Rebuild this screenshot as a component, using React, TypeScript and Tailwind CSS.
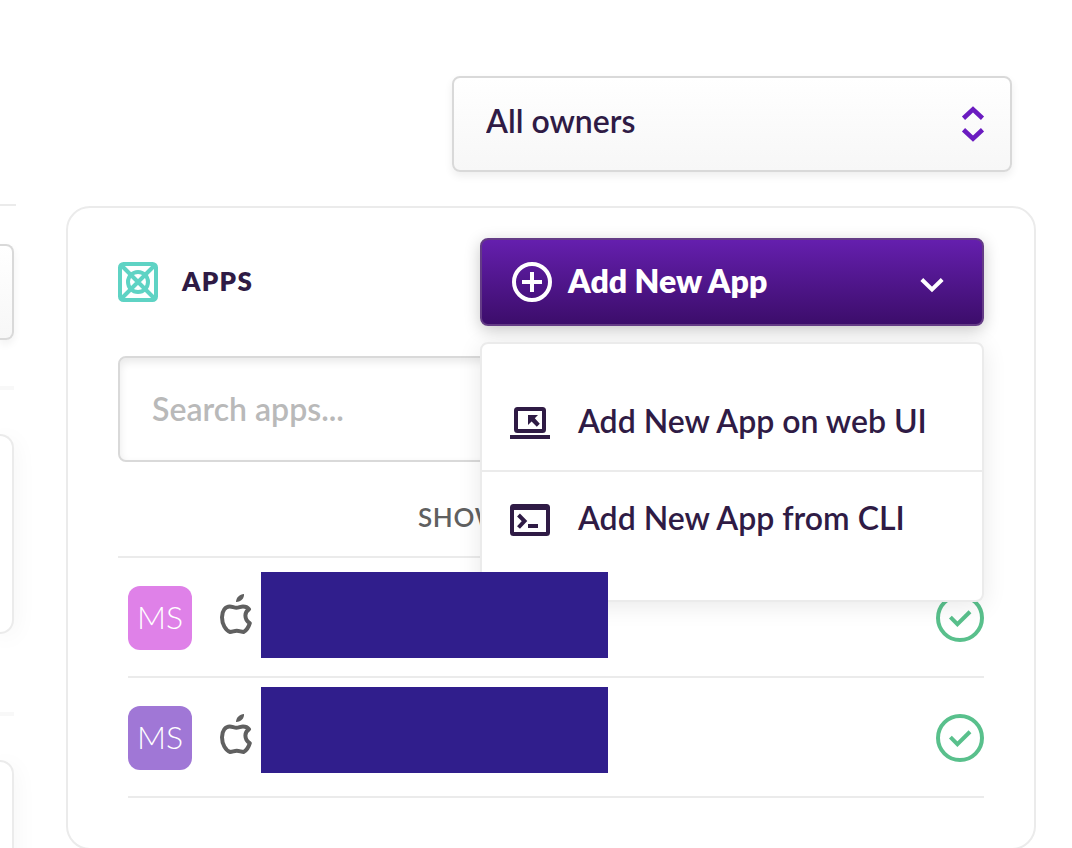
import type { ReactNode } from 'react'

type AppRow = {
  id: string
  initials: string
  tone: string
}

const apps: AppRow[] = [
  { id: 'app-1', initials: 'MS', tone: 'bg-[#df81e8]' },
  { id: 'app-2', initials: 'MS', tone: 'bg-[#a077d6]' },
]

function SortIcon() {
  return (
    <svg
      viewBox="0 0 24 40"
      className="pointer-events-none absolute top-7 right-[27px] h-10 w-6"
      fill="none"
      stroke="#6b1cc0"
      strokeWidth="4.6"
      aria-hidden="true"
    >
      <path d="M2.5 14.2 12 5.3l9.5 8.9M2.5 25.8l9.5 8.9 9.5-8.9" />
    </svg>
  )
}

function AppsIcon() {
  return (
    <svg viewBox="0 0 40 40" className="size-10" fill="none" stroke="#5fd3c4" aria-hidden="true">
      <rect x="2" y="2" width="36" height="36" rx="3.5" strokeWidth="4" />
      <circle cx="20" cy="20" r="10" strokeWidth="4" />
      <path d="M3 3l34 34M37 3 3 37" strokeWidth="4" />
    </svg>
  )
}

function PlusCircleIcon() {
  return (
    <svg viewBox="0 0 40 40" className="size-10" fill="none" stroke="#fff" strokeWidth="4" aria-hidden="true">
      <circle cx="20" cy="20" r="18" />
      <path d="M20 10v20M10 20h20" />
    </svg>
  )
}

function ChevronIcon() {
  return (
    <svg viewBox="0 0 24 24" className="ml-auto size-6" fill="none" stroke="#fff" strokeWidth="4" aria-hidden="true">
      <path d="M1.8 9.5 12 19.5 22.2 9.5" />
    </svg>
  )
}

function LaptopIcon() {
  return (
    <svg viewBox="0 0 40 32" className="h-8 w-10" fill="none" stroke="#2f1b45" strokeWidth="4" aria-hidden="true">
      <rect x="6" y="2" width="28" height="22" rx="1.5" />
      <path d="M0 30h40" />
      <path d="M18 8h10l-3.2 3.2 5 5.6-3 2.9-5.2-5.3L18 18z" fill="#2f1b45" stroke="none" />
    </svg>
  )
}

function TerminalIcon() {
  return (
    <svg viewBox="0 0 40 32" className="h-8 w-10" fill="none" stroke="#2f1b45" strokeWidth="4" aria-hidden="true">
      <rect x="2" y="2" width="36" height="28" rx="1.5" />
      <path d="M2 4h36M8.5 11l6 6-6 6.5M18 22h10" />
    </svg>
  )
}

function AppleIcon() {
  return (
    <svg viewBox="0 0 32 40" className="mb-2 h-10 w-8" fill="none" aria-hidden="true">
      <path d="M24 0c.4 4.4-3.2 8.2-8 8 0-4.4 3.6-7.800 8-8z" fill="#606060" />
      <path
        d="M16.4 13.7c2.2 0 4.2-1.2 6.6-1.2 2.4 0 4.6.9 6 2.7-2.4 1.5-3.6 3.5-3.6 6.3 0 3.6 1.4 5.8 4.4 7.7-1.2 3.9-3.6 7.5-6.2 8.8-2.2 0-4.2-1.2-6.8-1.2-2.6 0-4.4 1.2-6.6 1.2C5.6 36.5 2 30 2 23.3 2 16.7 5.4 12.5 9.8 12.5c2.4 0 4.4 1.2 6.6 1.2z"
        stroke="#606060"
        strokeWidth="4"
        strokeLinejoin="round"
      />
    </svg>
  )
}

function CheckIcon() {
  return (
    <svg viewBox="0 0 48 48" className="ml-auto size-12" fill="none" stroke="#59c08c" strokeWidth="4" aria-hidden="true">
      <circle cx="24" cy="24" r="22" />
      <path d="M14.4 23.2l7 7L34 17.8" />
    </svg>
  )
}

function MenuItem({ icon, children }: { icon: ReactNode; children: ReactNode }) {
  return (
    <li className="h-24 border-[#ebebeb] not-last:border-b-2">
      <button
        type="button"
        role="menuitem"
        className="flex size-full items-center gap-7 px-7 text-left text-[32px] leading-10 font-semibold whitespace-nowrap"
      >
        {icon}
        <span className="pb-1">{children}</span>
      </button>
    </li>
  )
}

function SideColumn() {
  return (
    <aside className="flex w-4 shrink-0 flex-col pt-[204px]">
      <hr className="shrink-0 border-t-2 border-[#ebebeb]" />
      <div className="mt-[38px] mr-0.5 h-24 shrink-0 rounded-r-lg border-2 border-l-0 border-[#d9d9d9] bg-linear-to-b from-white to-[#f7f7f7] shadow-[0_4px_8px_rgba(0,0,0,0.06)]" />
      <hr className="mt-[46px] mr-0.5 shrink-0 border-t-4 border-[#f8f8f8]" />
      <div className="mt-11 mr-0.5 h-[200px] shrink-0 rounded-r-2xl border-2 border-l-0 border-[#ebebeb] bg-white shadow-[0_4px_24px_rgba(0,0,0,0.06)]" />
      <hr className="mt-[78px] mr-0.5 shrink-0 border-t-4 border-[#f8f8f8]" />
      <div className="mt-11 mr-0.5 h-[200px] shrink-0 rounded-r-2xl border-2 border-l-0 border-[#ebebeb] bg-white shadow-[0_4px_24px_rgba(0,0,0,0.06)]" />
    </aside>
  )
}

export default function App() {
  return (
    <div className="flex h-screen overflow-hidden bg-white font-['Lato',sans-serif] text-[#2f1b45]">
      <SideColumn />

      <main className="min-w-0 flex-1 pt-[76px] pr-9 pl-[50px]">
        <div className="mr-6 flex justify-end">
          <div className="relative w-[560px]">
            <select
              aria-label="Owner"
              className="h-24 w-full appearance-none rounded-lg border-2 border-[#d9d9d9] bg-linear-to-b from-white to-[#f7f7f7] px-8 pb-1.5 text-[32px] font-semibold shadow-[0_4px_8px_rgba(0,0,0,0.07)]"
            >
              <option>All owners</option>
            </select>
            <SortIcon />
          </div>
        </div>

        <section className="mt-[34px] rounded-3xl border-2 border-[#ebebeb] px-[50px] pt-[30px] pb-[50px]">
          <header className="flex items-center justify-between">
            <div className="flex items-center gap-6">
              <AppsIcon />
              <h2 className="pb-0.5 text-[26px] leading-8 font-extrabold tracking-wider">APPS</h2>
            </div>

            <div className="relative w-[504px]">
              <button
                type="button"
                aria-expanded="true"
                aria-haspopup="menu"
                className="flex h-[88px] w-full items-center gap-4 rounded-lg border-2 border-[#643c86] bg-linear-to-b from-[#651fae] to-[#3c0d6b] pr-[38px] pl-[30px] text-[32px] font-extrabold text-white shadow-[0_4px_16px_rgba(0,0,0,0.22)]"
              >
                <PlusCircleIcon />
                <span className="pb-0.5">Add New App</span>
                <ChevronIcon />
              </button>

              <ul
                role="menu"
                className="absolute top-full right-0 z-10 mt-4 w-full rounded-lg border-2 border-[#ebebeb] bg-white py-8 shadow-[0_4px_24px_rgba(0,0,0,0.09)]"
              >
                <MenuItem icon={<LaptopIcon />}>Add New App on web UI</MenuItem>
                <MenuItem icon={<TerminalIcon />}>Add New App from CLI</MenuItem>
              </ul>
            </div>
          </header>

          <input
            type="search"
            aria-label="Search apps"
            placeholder="Search apps..."
            className="mt-[30px] h-[106px] w-full rounded-lg border-2 border-[#d9d9d9] bg-white px-8 pb-0.5 text-[32px] font-semibold shadow-[inset_0_4px_8px_rgba(0,0,0,0.09)] placeholder:text-[#b9b9b9]"
          />

          <div className="flex h-24 items-center border-b-2 border-[#ebebeb] pt-8 pb-4 pl-[300px]">
            <span className="text-[26px] leading-8 font-semibold tracking-wide text-[#606060]">SHOW</span>
          </div>

          <div className="relative ml-2.5">
            <ul>
              {apps.map((app) => (
                <li key={app.id} className="flex h-[120px] items-center gap-7 border-b-2 border-[#ebebeb] pt-0.5">
                  <span className={`flex size-16 items-center justify-center rounded-xl pb-0.5 text-[32px] font-light text-white ${app.tone}`}>
                    {app.initials}
                  </span>
                  <AppleIcon />
                  <CheckIcon />
                </li>
              ))}
            </ul>

            {/* app names stay covered, above the open menu */}
            <div className="absolute top-3.5 left-[133px] z-20 flex w-[347px] flex-col gap-[29px]">
              {apps.map((app) => (
                <div key={app.id} className="h-[86px] bg-[#301e8c]" />
              ))}
            </div>
          </div>
        </section>
      </main>
    </div>
  )
}
